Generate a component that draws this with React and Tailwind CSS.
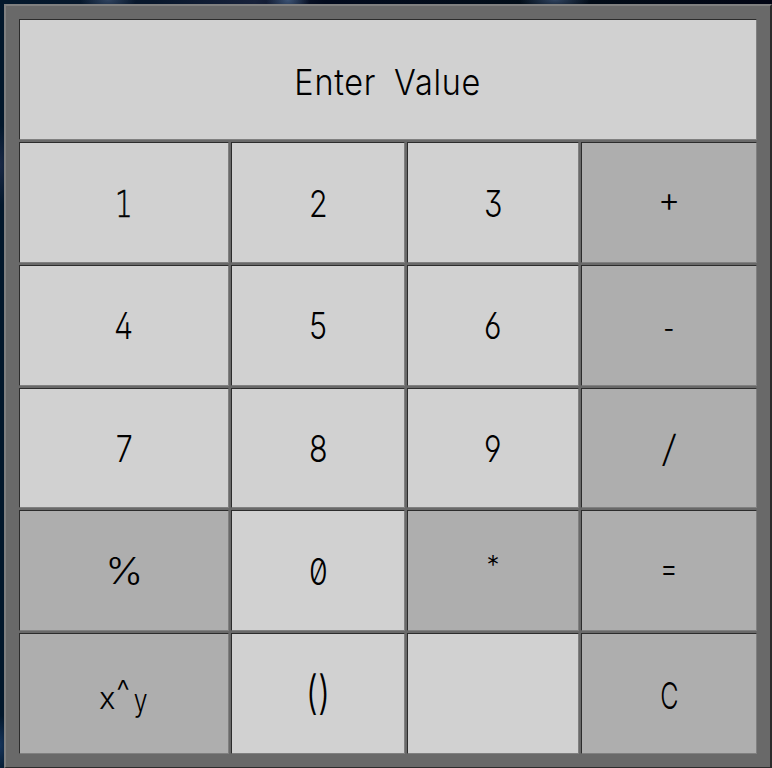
const light = 'font-light';
const thin = 'font-extralight';

const keys = [
  { t: '1', w: light, s: 'text-[37px] pt-[4px] font-["DejaVu_Sans",sans-serif]', g: 'scale-x-[0.75] [-webkit-text-stroke:0.6px_black]' },
  { t: '2', w: light, s: 'text-[37px] pt-[2px]' },
  { t: '3', w: light, s: 'text-[37px] pt-[2px]' },
  { t: '+', w: light, op: true, s: 'text-[34px] pb-[5px]', g: 'scale-x-[1]' },
  { t: '4', w: light, s: 'text-[37px] pb-[1px]' },
  { t: '5', w: light, s: 'text-[37px] pb-[1px]' },
  { t: '6', w: light, s: 'text-[37px] pb-[1px]' },
  { t: '-', w: light, op: true, s: 'text-[30px] pt-[4px]' },
  { t: '7', w: light, s: 'text-[37px] pt-[1px]' },
  { t: '8', w: light, s: 'text-[37px] pt-[1px]' },
  { t: '9', w: light, s: 'text-[37px] pt-[1px]' },
  { t: '/', w: thin, op: true, s: 'text-[37px]', g: 'scale-x-[1.35]' },
  { t: '%', w: light, op: true, s: 'text-[37px]', g: 'scale-x-[1.1]' },
  { t: '0', w: light, s: 'text-[37px] pt-[2px]' },
  { t: '*', w: light, op: true, s: 'text-[26px] pb-[11px]', g: 'scale-x-[1]' },
  { t: '=', w: light, op: true, s: 'text-[33px] pb-[4px]' },
  { t: 'x^y', w: light, op: true, s: '' },
  { t: '()', w: light, s: 'text-[46px] pb-[3px]', g: 'scale-x-[0.76]' },
  { t: '' },
  { t: 'C', w: light, op: true, s: 'text-[37px] pt-[3px]', g: 'scale-x-[0.68]' },
];

const cell =
  'flex items-center justify-center border border-t-[#2c2c2c] border-l-[#2c2c2c] border-r-[#808080] border-b-[#808080] overflow-hidden';

function Power() {
  return (
    <span className="flex items-baseline gap-[1px] pt-[9px] text-[31px] leading-none">
      <span>x</span>
      <span className="-translate-y-[6px] text-[32px]">
        <span className="inline-block scale-x-[0.95]">^</span>
      </span>
      <span className="inline-block translate-y-[2px] scale-x-[0.8]">y</span>
    </span>
  );
}

export default function App() {
  return (
    <div className="flex h-[768px] w-[772px] overflow-hidden bg-[#020d20] bg-[radial-gradient(ellipse_28px_14px_at_108px_0px,#30435f,transparent),radial-gradient(ellipse_22px_16px_at_288px_0px,#3c5374,transparent),radial-gradient(ellipse_36px_12px_at_555px_0px,#30435f,transparent),radial-gradient(ellipse_14px_40px_at_0px_165px,#1a2946,transparent),radial-gradient(ellipse_12px_30px_at_0px_745px,#16345b,transparent),linear-gradient(to_right,#03182c_0%,#08172c_20%,#17213a_33%,#020a1d_42%,#010d18_70%,#020514_100%)] pt-1 pl-1 font-[Inter,sans-serif] text-black">
      <div className="grid h-[764px] w-[768px] grid-cols-[210px_174px_172px_176px] grid-rows-[121px_121px_121px_120px_121px_121px] gap-[2px] border-t-2 border-r-2 border-b border-l-2 border-t-[#808080] border-r-[#2c2c2c] border-b-[#2c2c2c] border-l-[#808080] bg-[#696969] p-[13px]">
        <div className={`${cell} col-span-4 bg-[#d1d1d1] pt-[4px]`}>
          <span className="scale-x-[0.9] text-[36px] font-light tracking-[0.8px] whitespace-nowrap [word-spacing:9px]">
            Enter Value
          </span>
        </div>
        {keys.map((k, i) => (
          <button
            key={i}
            className={`${cell} ${k.w || ''} ${k.op ? 'bg-[#aeaeae]' : 'bg-[#d1d1d1]'} ${k.s || ''}`}
          >
            {k.t === 'x^y' ? (
              <Power />
            ) : (
              <span className={`${k.g || 'scale-x-[0.82]'} leading-none [font-feature-settings:'zero','cv02','cv03','cv04','cv09']`}>
                {k.t}
              </span>
            )}
          </button>
        ))}
      </div>
    </div>
  );
}
